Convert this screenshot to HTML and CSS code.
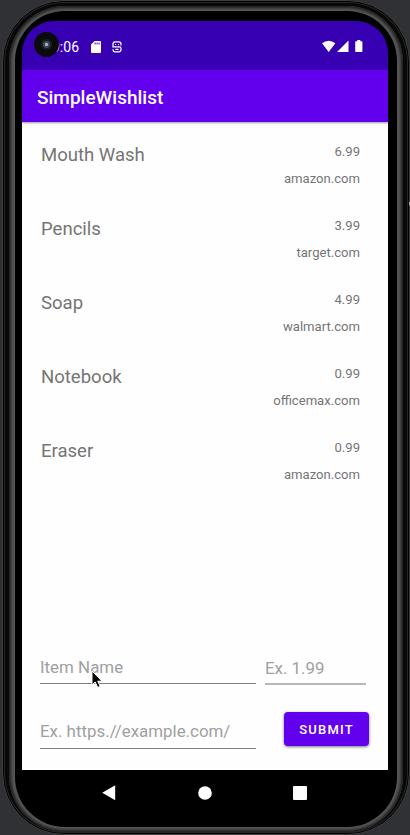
FILE: index.html
```html
<!DOCTYPE html>
<html lang="en">
<head>
<meta charset="utf-8">
<title>SimpleWishlist</title>
<link rel="stylesheet" href="styles.css">
</head>
<body>
<div class="phone">
  <div class="rim">
    <div class="bezel">
      <div class="screen">
        <header class="status">
          <span class="clock">9:06</span>
          <svg class="sd" width="10" height="12" viewBox="0 0 10 12"><path fill="#fff" fill-rule="evenodd" d="M3.5 0H9q1 0 1 1v10q0 1-1 1H1q-1 0-1-1V3.5zM3.6 1.5v2h1v-2zM5.6 1.5v2h1v-2zM7.6 1.5v2h1v-2z"/></svg>
          <svg class="bug" width="10" height="12" viewBox="0 0 10 12"><path fill="none" stroke="#fff" stroke-width="1.2" d="M1 5.8V3.2Q1 .8 3.2.8h3.6Q9 .8 9 3.2v1.4M.4 5.9h7.2Q9 5.9 9 7.6v1q0 2.2-2.2 2.2H3.2Q1 10.8 1 8.6v-.4M3 3.5h1M6 3.5h1M3.5 8.3h3"/></svg>
          <svg class="signals" width="42" height="13" viewBox="0 0 42 13"><path fill="#fff" d="M0 3.3Q6.7-2 13.4 3.3L6.7 12zM15 12 26.5.4V12zM33.2 2q0-.8.8-.8h1.3V0h3v1.2h1.3q.8 0 .8.8v9.3q0 .8-.8.8H34q-.8 0-.8-.8z"/></svg>
        </header>
        <div class="appbar"><h1>SimpleWishlist</h1></div>
        <main>
          <ul class="list">
            <li><span class="name">Mouth Wash</span><span class="info"><span>6.99</span><span>amazon.com</span></span></li>
            <li><span class="name">Pencils</span><span class="info"><span>3.99</span><span>target.com</span></span></li>
            <li><span class="name">Soap</span><span class="info"><span>4.99</span><span>walmart.com</span></span></li>
            <li><span class="name">Notebook</span><span class="info"><span>0.99</span><span>officemax.com</span></span></li>
            <li><span class="name">Eraser</span><span class="info"><span>0.99</span><span>amazon.com</span></span></li>
          </ul>
          <form class="form">
            <div class="field item">Item Name</div>
            <div class="field price">Ex. 1.99</div>
            <div class="field url">Ex. https.//example.com/</div>
            <button class="submit" type="button">SUBMIT</button>
          </form>
        </main>
        <nav class="nav">
          <svg width="14" height="16" viewBox="0 0 14 16"><path fill="#fff" d="M13.2.3v15L.2 7.8z"/></svg>
          <svg width="14" height="14" viewBox="0 0 14 14"><circle cx="7" cy="7" r="6.8" fill="#fff"/></svg>
          <svg width="14" height="14" viewBox="0 0 14 14"><rect width="14" height="14" rx="1" fill="#fff"/></svg>
        </nav>
      </div>
    </div>
  </div>
  <div class="camera"></div>
  <div class="side-key"></div>
  <svg class="cursor" width="14" height="20" viewBox="0 0 14 20"><path fill="#000" stroke="#fff" stroke-width="1" d="M1 1v14l3.2-3 2.5 5.5 2.5-1.2-2.5-5.1H11z"/></svg>
</div>
</body>
</html>
```

FILE: styles.css
```css
* { box-sizing: border-box; }
body { margin: 0; background: #303134; font-family: Roboto, sans-serif; overflow: hidden; }
.phone {
  position: relative; width: 408px; height: 835px; margin-left: 2px; padding: 5px 6px 3px;
  background: #080808; border: 1px solid #3c3c3c; border-radius: 62px;
  box-shadow: inset 0 0 0 1px #000, inset 0 0 0 2px #252525;
}
.rim {
  height: 826px; width: 394px; padding: 5px 6px; border-radius: 56px;
  background: #565656; box-shadow: inset 0 0 3px 2px #1c1c1c;
}
.bezel { height: 816px; background: #000; border-radius: 50px; padding: 10px 7px 0; }
.screen { width: 366px; }
.status {
  height: 49px; background: #3700b3; border-radius: 32px 32px 0 0; color: #fff;
  display: flex; align-items: center; padding: 2px 24px 0 28px;
}
.clock { font-size: 14px; width: 29px; text-align: right; }
.sd { margin-left: 12px; }
.bug { margin-left: 11px; }
.signals { margin-left: auto; }
.appbar { height: 52px; background: #6200ee; padding-left: 15px; display: flex; align-items: center; box-shadow: 0 1px 2px #0006; position: relative; }
h1 { margin: 3px 0 0; color: #fff; font-size: 19px; line-height: 24px; font-weight: 500; }
main { height: 648px; background: #fefefe; display: flex; flex-direction: column; justify-content: space-between; }
.list { margin: 0; padding: 19px 28px 0 19px; list-style: none; color: #757575; }
.list li { height: 74px; display: flex; justify-content: space-between; }
.name { font-size: 18.55px; line-height: 28px; }
.info { display: flex; flex-direction: column; text-align: right; font-size: 13.1px; line-height: 20px; gap: 7px; padding-top: 1px; }
.form { display: grid; grid-template-columns: 216px 101px; column-gap: 9px; padding: 0 0 14px 18px; height: 121px; grid-template-rows: 43px 64px; }
.field { border-bottom: 1px solid #7d7d7d; color: #a0a0a0; font-size: 16.9px; line-height: 22px; white-space: nowrap; }
.item { height: 35px; padding-top: 7px; }
.price { height: 36px; padding-top: 8px; border-bottom: 2px solid #b8b8b8; }
.url { height: 37px; padding-top: 8px; margin-top: 20px; }
.submit { width: 85px; height: 34px; margin: 20px 0 0 19px; padding: 0; border: 0; border-radius: 4px; background: #6200ee; color: #fff; font: 500 13px Roboto, sans-serif; letter-spacing: 1.2px; box-shadow: 0 1px 3px #0008; }
.nav { height: 46px; display: flex; align-items: center; justify-content: space-between; padding: 0 81px 0 80px; }
.camera { position: absolute; left: 31px; top: 31px; width: 25px; height: 25px; border-radius: 50%; background: radial-gradient(circle, #a9bacb 0 1px, #424958 2px 3px, #171b22 4px 5px, #0a0a0a 6px); }
.side-key { position: absolute; right: -1px; top: 201px; width: 1px; height: 3px; background: #bbb; }
.cursor { position: absolute; left: 88px; top: 669px; }
```
